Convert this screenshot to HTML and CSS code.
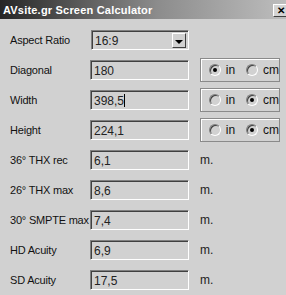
FILE: index.html
```html
<!DOCTYPE html>
<html lang="en">
<head>
    <meta charset="UTF-8">
    <title>AVsite.gr Screen Calculator</title>
    <link rel="stylesheet" href="styles.css">
</head>
<body>

    <div class="titlebar">
        <span class="title">AVsite.gr Screen Calculator</span>
        <span class="close">&#x2715;</span>
    </div>

    <div class="calc">
        <label>Aspect Ratio</label>
        <div class="select">
            <span>16:9</span>
            <span class="drop"><span class="arrow"></span></span>
        </div>
        <span></span>

        <label>Diagonal</label>
        <div class="field">180</div>
        <div class="units">
            <span class="radio on"></span><span>in</span>
            <span class="radio"></span><span>cm</span>
        </div>

        <label>Width</label>
        <div class="field">398,5<span class="caret"></span></div>
        <div class="units">
            <span class="radio"></span><span>in</span>
            <span class="radio on"></span><span>cm</span>
        </div>

        <label>Height</label>
        <div class="field">224,1</div>
        <div class="units">
            <span class="radio"></span><span>in</span>
            <span class="radio on"></span><span>cm</span>
        </div>

        <label>36&deg; THX rec</label>
        <div class="field">6,1</div>
        <span class="unit">m.</span>

        <label>26&deg; THX max</label>
        <div class="field">8,6</div>
        <span class="unit">m.</span>

        <label>30&deg; SMPTE max</label>
        <div class="field">7,4</div>
        <span class="unit">m.</span>

        <label>HD Acuity</label>
        <div class="field">6,9</div>
        <span class="unit">m.</span>

        <label>SD Acuity</label>
        <div class="field">17,5</div>
        <span class="unit">m.</span>
    </div>

</body>
</html>
```

FILE: styles.css
```css
body {
    margin: 0;
    background: #d1d1d1;
    font-family: "Liberation Sans", Arial, sans-serif;
    font-size: 11px;
    color: #111;
    overflow: hidden;
}
.titlebar {
    height: 19px;
    display: flex;
    align-items: center;
    justify-content: space-between;
    padding-left: 3px;
    background: linear-gradient(to right, #262626, #8c8c8c 55%, #bdbdbd);
}
.title {
    color: #fff;
    font-weight: bold;
    font-size: 11px;
    letter-spacing: 0.2px;
}
.close {
    width: 13px;
    height: 11px;
    margin-top: 1px;
    margin-right: -2px;
    background: #d4d4d4;
    border: 1px solid;
    border-color: #fff #404040 #404040 #fff;
    font-size: 10px;
    font-weight: bold;
    line-height: 11px;
    text-align: center;
    color: #000;
}
.calc {
    display: grid;
    grid-template-columns: 80px 110px 80px;
    grid-auto-rows: 30px;
    align-items: center;
    padding: 6px 0 0 10px;
    white-space: nowrap;
}
.calc label {
    letter-spacing: -0.2px;
}
.field, .select {
    box-sizing: border-box;
    width: 99px;
    height: 20px;
    border: 1px solid;
    border-color: #808080 #fff #fff #808080;
    box-shadow: inset 1px 1px #404040;
    padding: 3px 0 0 3px;
    font-size: 12px;
    color: #222;
}
.select {
    display: flex;
    justify-content: space-between;
    margin-left: 1px;
    width: 98px;
    padding: 1px 2px 0 3px;
    align-items: flex-start;
}
.select span:first-child {
    margin-top: 2px;
}
.drop {
    width: 12px;
    height: 13px;
    margin-top: 1px;
    border: 1px solid;
    border-color: #fff #404040 #404040 #fff;
    display: flex;
    align-items: center;
    justify-content: center;
}
.arrow {
    border-left: 4px solid transparent;
    border-right: 4px solid transparent;
    border-top: 4px solid #000;
}
.caret {
    display: inline-block;
    width: 1px;
    height: 13px;
    background: #000;
    vertical-align: -2px;
}
.units {
    box-sizing: border-box;
    width: 80px;
    height: 24px;
    border: 1px solid #8a8a8a;
    box-shadow: inset 1px 1px #fff;
    display: flex;
    align-items: center;
    padding-left: 8px;
    font-size: 12px;
}
.units span:nth-child(2) {
    margin: 0 11px 0 5px;
}
.units span:last-child {
    margin-left: 5px;
}
.radio {
    box-sizing: border-box;
    width: 12px;
    height: 12px;
    border-radius: 50%;
    border: 1px solid;
    border-color: #808080 #fff #fff #808080;
    box-shadow: inset 1px 1px #404040;
    background: #d1d1d1;
    display: flex;
    align-items: center;
    justify-content: center;
}
.radio.on::after {
    content: "";
    width: 4px;
    height: 4px;
    border-radius: 50%;
    background: #000;
}
.unit {
    font-size: 12px;
    color: #222;
}
```
